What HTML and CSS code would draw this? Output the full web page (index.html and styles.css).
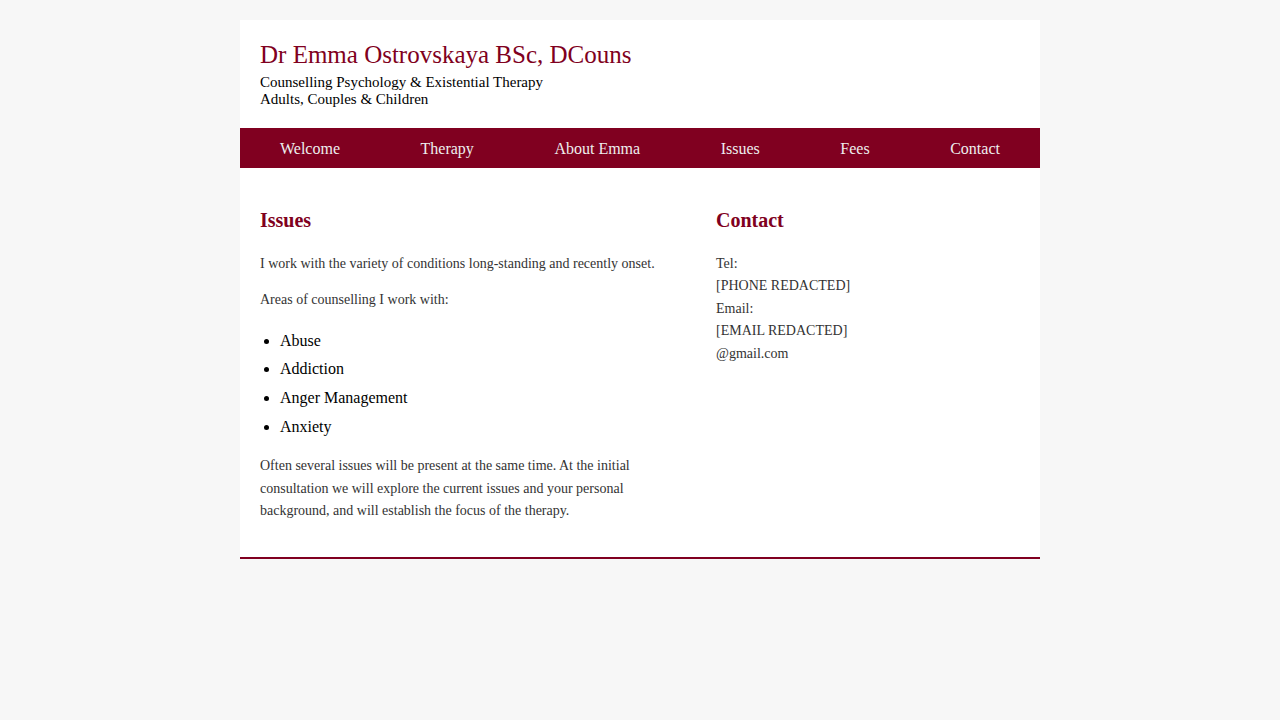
FILE: index.html
```html
<!DOCTYPE html>
<html lang="en">
<head>
<meta charset="utf-8">
<title>Dr Emma Ostrovskaya - Issues</title>
<link rel="stylesheet" href="styles.css">
</head>
<body>
<div class="page">
  <header class="masthead">
    <h1 class="site-title">Dr Emma Ostrovskaya BSc, DCouns</h1>
    <div class="tagline">Counselling Psychology &amp; Existential Therapy<br>Adults, Couples &amp; Children</div>
  </header>
  <nav class="mainnav">
    <a href="#">Welcome</a>
    <a href="#">Therapy</a>
    <a href="#">About Emma</a>
    <a href="#">Issues</a>
    <a href="#">Fees</a>
    <a href="#">Contact</a>
  </nav>
  <main class="content">
    <section class="main-col">
      <h2>Issues</h2>
      <p>I work with the variety of conditions long-standing and recently onset.</p>
      <p>Areas of counselling I work with:</p>
      <ul class="issue-list">
        <li>Abuse</li>
        <li>Addiction</li>
        <li>Anger Management</li>
        <li>Anxiety</li>
      </ul>
      <p>Often several issues will be present at the same time. At the initial consultation we will explore the current issues and your personal background, and will establish the focus of the therapy.</p>
    </section>
    <aside class="side-col">
      <h2>Contact</h2>
      <p class="contact">Tel:<br>[PHONE REDACTED]<br>Email:<br>[EMAIL REDACTED]<br>@gmail.com</p>
    </aside>
  </main>
</div>
</body>
</html>
```

FILE: styles.css
```css
html, body {
  margin: 0;
  padding: 0;
}
body {
  background: #f7f7f7;
  font-family: "Liberation Serif", "Times New Roman", serif;
  color: #333;
}
.page {
  width: 800px;
  margin: 20px auto 0;
  background: #fff;
  border-bottom: 2px solid #800020;
}
.masthead {
  padding: 19px 20px 20px;
}
.site-title {
  margin: 0 0 3px;
  font-size: 25px;
  font-weight: normal;
  line-height: 32px;
  color: #800020;
}
.tagline {
  font-size: 15px;
  line-height: 17px;
  color: #000;
}
.mainnav {
  display: flex;
  justify-content: space-between;
  align-items: center;
  height: 40px;
  box-sizing: border-box;
  padding: 2px 40px 0;
  background: #800020;
}
.mainnav a {
  color: #eee;
  text-decoration: none;
  font-size: 16px;
}
.content {
  display: grid;
  grid-template-columns: 60% 40%;
  padding: 21px 20px 21px;
}
.main-col {
  padding-right: 40px;
}
.content h2 {
  margin: 20px 0 21px;
  font-size: 20px;
  line-height: 23px;
  color: #800020;
}
.content p {
  margin: 14px 0;
  font-size: 14px;
  line-height: 22.4px;
}
.issue-list {
  margin: 16px 0;
  padding-left: 20px;
  color: #000;
  font-size: 16px;
}
.issue-list li {
  line-height: 25.6px;
  margin-bottom: 3px;
}
.issue-list li:last-child {
  margin-bottom: 0;
}
```
